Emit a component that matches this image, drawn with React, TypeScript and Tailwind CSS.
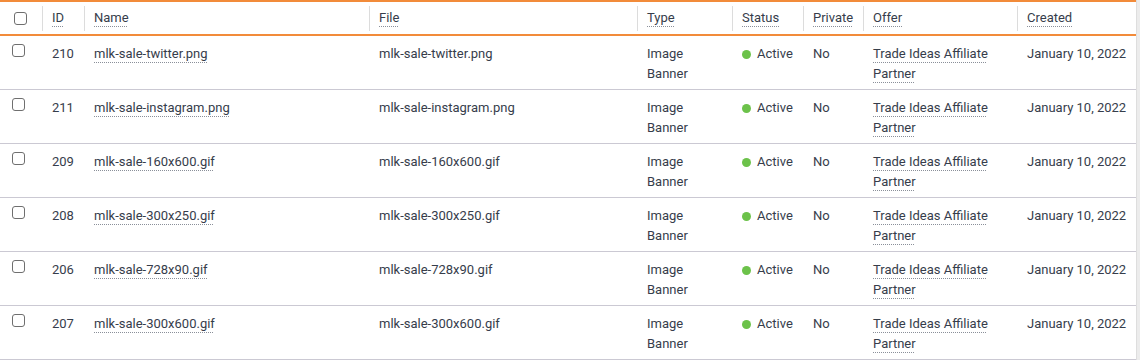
import React from "react";

const rows = [
  { id: 210, name: "mlk-sale-twitter.png" },
  { id: 211, name: "mlk-sale-instagram.png" },
  { id: 209, name: "mlk-sale-160x600.gif" },
  { id: 208, name: "mlk-sale-300x250.gif" },
  { id: 206, name: "mlk-sale-728x90.gif" },
  { id: 207, name: "mlk-sale-300x600.gif" },
];

const labels = ["ID", "Name", "File", "Type", "Status", "Private", "Offer", "Created"];

const grid = "grid grid-cols-[42px_42px_285px_268px_95px_71px_60px_154px_119px]";

function Box() {
  return <div className="w-[13px] h-[13px] rounded-[3px] border border-[#6f6f6f] bg-white" />;
}

const dotted = "underline decoration-dotted decoration-[#8a8f99] underline-offset-[4px] decoration-1";

export default function App() {
  return (
    <div className="flex w-[1140px] bg-white" style={{ fontFamily: "Roboto, 'Noto Sans', sans-serif" }}>
      <div className="w-[1136px] text-[13px] leading-[20px] text-[#363d4b]">
        <div className="h-[2px] bg-[#f28b3a]" />
        <div className={`${grid} h-[32px] items-center`}>
          <div className="pl-[14px] pt-[1px]">
            <Box />
          </div>
          {labels.map((l) => (
            <div key={l} className="flex items-center h-[25px] border-l border-[#dcdcdc] pl-[9px]">
              <span className={dotted}>{l}</span>
            </div>
          ))}
        </div>
        <div className="h-[2px] bg-[#f28b3a]" />
        {rows.map((r) => (
          <div key={r.id} className={`${grid} h-[54px] border-b border-b-[#cbc9d3] pt-[8px]`}>
            <div className="pl-[12px]">
              <Box />
            </div>
            <div className="pl-[10px]">{r.id}</div>
            <div className="pl-[10px]">
              <span className={dotted}>{r.name}</span>
            </div>
            <div className="pl-[10px]">{r.name}</div>
            <div className="pl-[10px]">
              Image
              <br />
              Banner
            </div>
            <div className="pl-[10px]">
              <span className="inline-flex items-center gap-[6px]">
                <span className="inline-block w-[9px] h-[9px] rounded-full bg-[#6cc24a]" />
                Active
              </span>
            </div>
            <div className="pl-[10px]">No</div>
            <div className="pl-[10px]">
              <span className={dotted}>Trade Ideas Affiliate Partner</span>
            </div>
            <div className="pl-[10px] whitespace-nowrap">January 10, 2022</div>
          </div>
        ))}
      </div>
      <div className="w-[4px] bg-[#ececec] border-l border-[#dedede]" />
    </div>
  );
}
